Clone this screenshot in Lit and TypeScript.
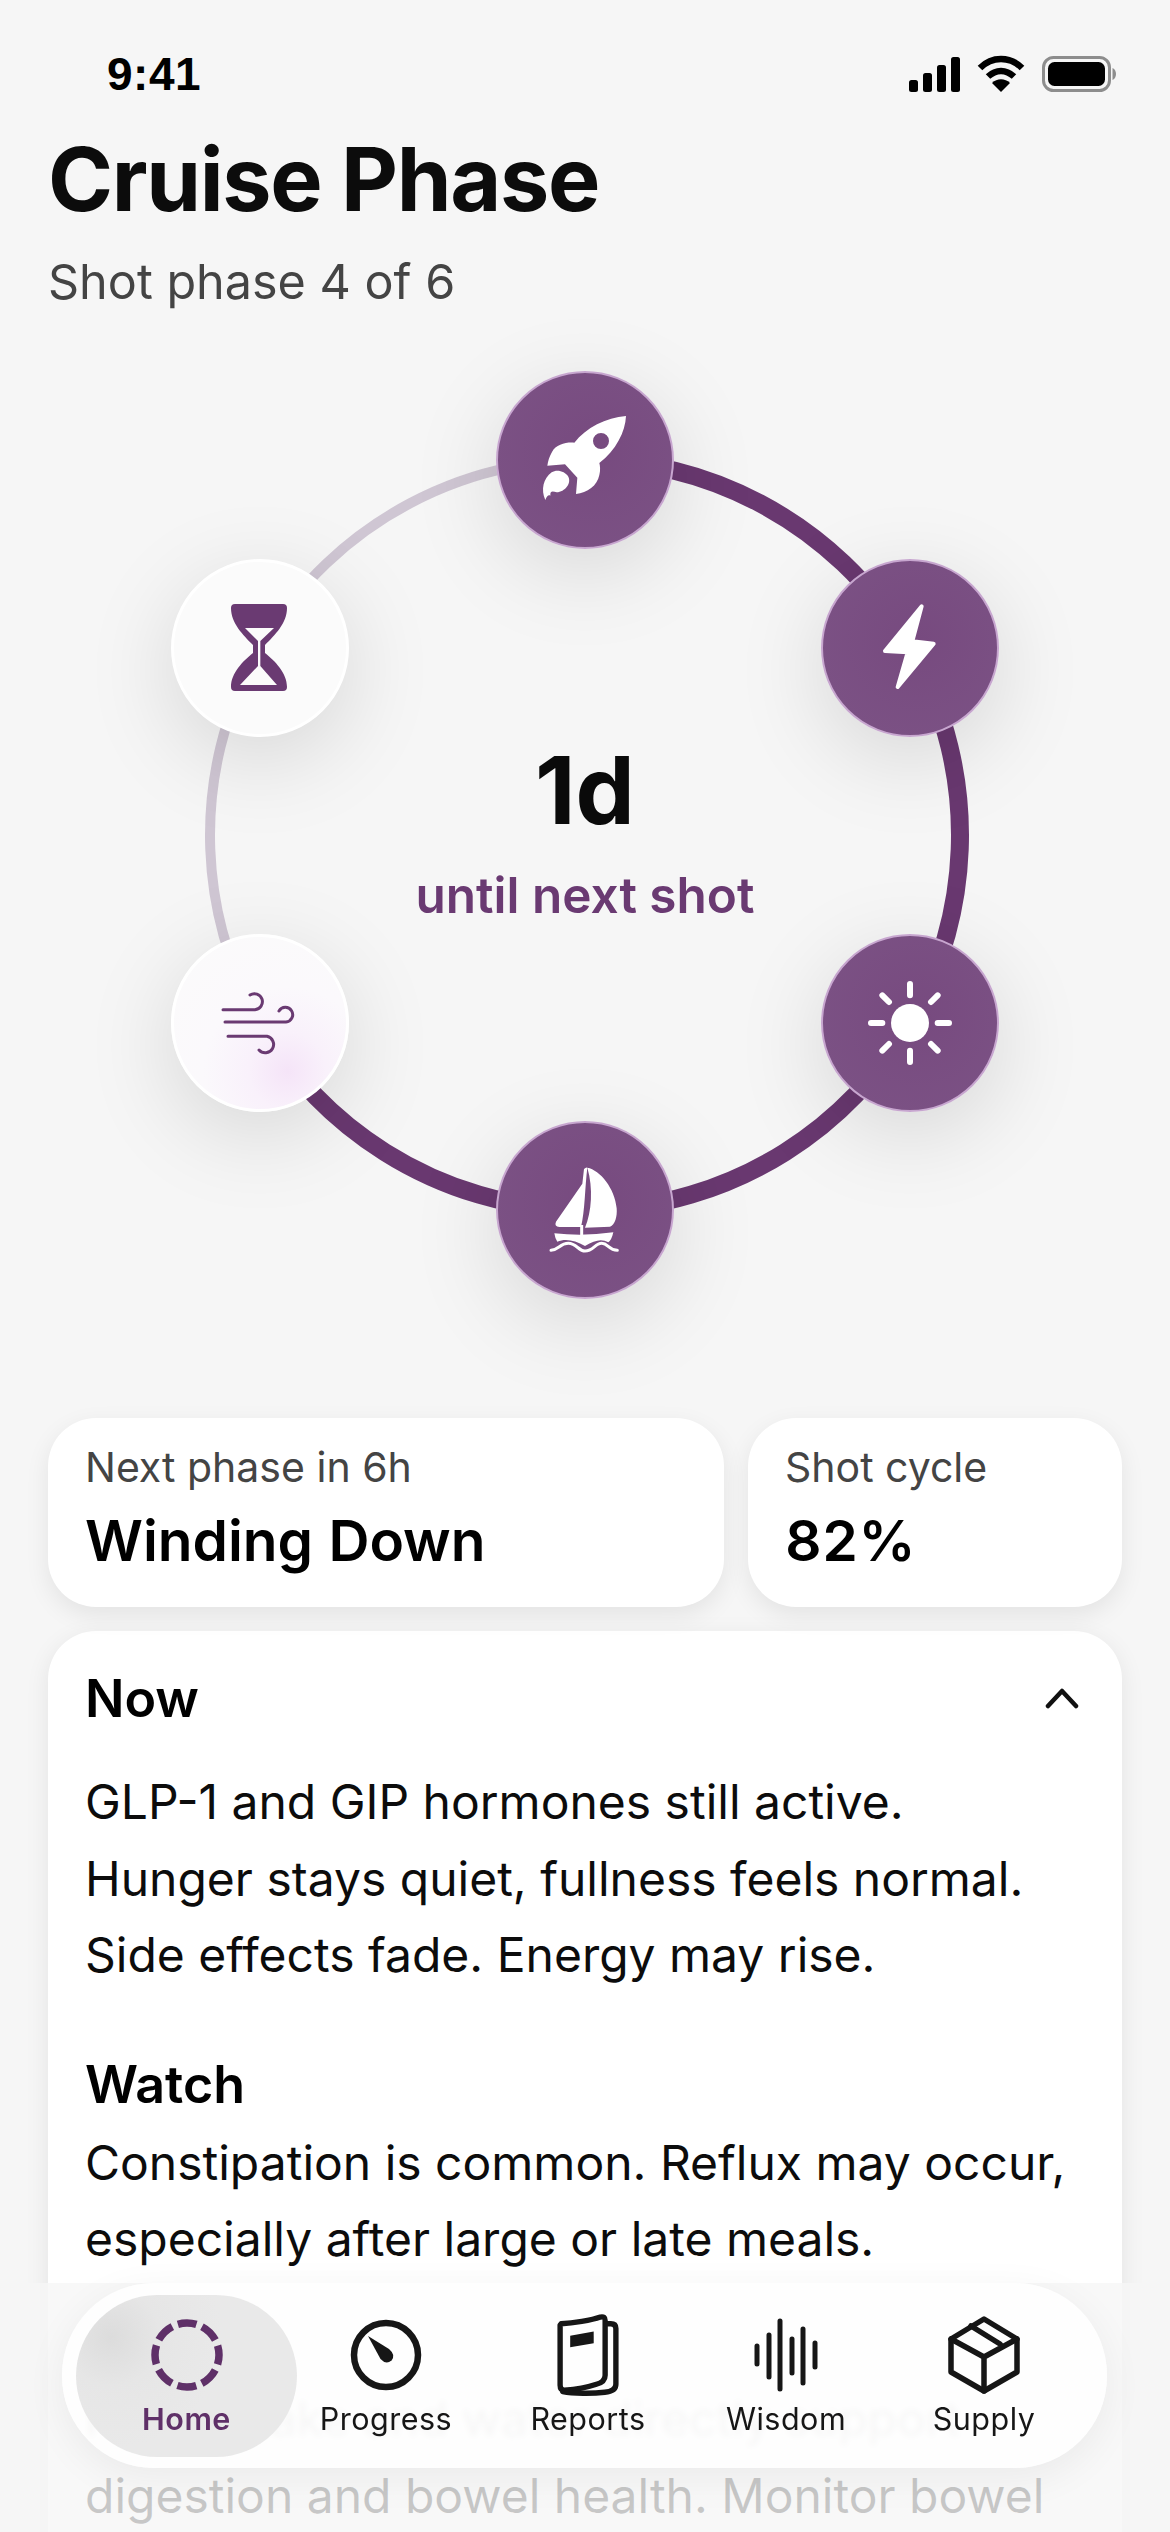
import { LitElement, html, css, svg } from "lit";
import { customElement } from "lit/decorators.js";

const ICONS: Record<string, unknown> = {
  rocket: svg`<path fill="#fff" fill-rule="evenodd" d="M378 123C318 128 258 158 223 203C198 201 168 208 156 231C148 245 144 258 142 272L195 268L232 308L228 357C262 354 292 332 298 300C302 285 300 272 298 264C348 226 376 170 378 123ZM303 174A24 24 0 1 1 303 222A24 24 0 1 1 303 174Z"/>
    <path fill="#fff" d="M136 375C122 345 130 310 155 292C170 282 195 288 205 305C215 325 195 350 170 352C160 350 150 345 151 362C145 358 140 365 136 375Z"/>`,
  bolt: svg`<path fill="#fff" stroke="#fff" stroke-width="12" stroke-linejoin="round" d="M290 130L262 235L326 242L218 372L248 268L180 264Z"/>`,
  sun: svg`<circle cx="255" cy="255" r="57" fill="#fff"/>
    <g stroke="#fff" stroke-width="18" stroke-linecap="round">
      <path d="M255 138V172M255 338V372M138 255H172M338 255H372M172 172L192 192M318 318L338 338M338 172L318 192M192 318L172 338"/>
    </g>`,
  boat: svg`<g fill="#fff">
      <path d="M262 128C300 135 345 190 350 250C352 275 345 300 330 305L255 308C275 260 280 190 262 128Z"/>
      <path d="M252 132Q258 126 262 128C255 180 255 260 243 306L178 306Q162 304 168 290L247 176Z"/>
      <path d="M163 325Q250 335 340 322Q335 345 325 352C305 340 285 345 255 363C225 345 195 340 172 350Q165 340 163 325Z"/>
    </g>
    <path fill="none" stroke="#fff" stroke-width="9" d="M245 300V330"/>
    <path fill="none" stroke="#fff" stroke-width="9" stroke-linecap="round" d="M153 376C175 375 180 355 205 355C230 355 235 378 255 378C280 378 285 355 305 355C325 355 325 376 352 376"/>`,
  wind: svg`<g fill="none" stroke="#6a3a72" stroke-width="9" stroke-linecap="round">
      <path d="M144 215H240A24 24 0 1 0 225 171"/>
      <path d="M150 252H333A22 22 0 1 0 312 219"/>
      <path d="M159 295H276A25 25 0 1 1 252 336"/>
    </g>`,
  glass: svg`<path fill="#6a3a72" d="M180 123H324Q336 123 336 135C336 180 300 216 270 246V270C300 294 336 330 336 372Q336 384 324 384H180Q168 384 168 372C168 330 204 294 234 270V246C204 216 168 180 168 135Q168 123 180 123Z"/>
    <path fill="#fbfbfb" d="M210 195H297L256 234V309L306 366H195L249 309V234Z"/>`,
};

const NODES = [
  { name: "rocket", angle: -90, on: true },
  { name: "bolt", angle: -30, on: true },
  { name: "sun", angle: 30, on: true },
  { name: "boat", angle: 90, on: true },
  { name: "wind", angle: 150, on: false },
  { name: "glass", angle: 210, on: false },
];

const RING_R = 375;
const RING_C = 450;

const point = (deg: number) => {
  const rad = (deg * Math.PI) / 180;
  return { x: RING_C + RING_R * Math.cos(rad), y: RING_C + RING_R * Math.sin(rad) };
};

const arc = (from: number, to: number) => {
  const a = point(from);
  const b = point(to);
  const large = to - from > 180 ? 1 : 0;
  return `M${a.x} ${a.y}A${RING_R} ${RING_R} 0 ${large} 1 ${b.x} ${b.y}`;
};

@customElement("app-root")
export class AppRoot extends LitElement {
  static styles = css`
    :host {
      display: block;
      position: relative;
      width: 1170px;
      height: 2532px;
      overflow: hidden;
      background: #f6f6f6;
      font-family: Inter, "Liberation Sans", sans-serif;
      color: #0b0b0b;
    }
    .status {
      display: flex;
      justify-content: space-between;
      align-items: center;
      height: 36px;
      padding: 56px 54px 0 107px;
    }
    .time {
      font-family: "Liberation Sans", Inter, sans-serif;
      font-size: 46px;
      font-weight: 700;
      color: #000;
      letter-spacing: 0.5px;
    }
    .status-icons {
      display: flex;
      align-items: center;
      gap: 17px;
    }
    .status-icons svg {
      display: block;
    }
    header {
      padding: 37px 48px 0;
    }
    h1 {
      margin: 0;
      font-size: 88px;
      line-height: 100px;
      font-weight: 700;
      letter-spacing: -1.3px;
      color: #0c0c0c;
    }
    .sub {
      margin-top: 23px;
      font-size: 48.5px;
      line-height: 60px;
      color: #444;
    }
    .ring {
      position: relative;
      width: 900px;
      height: 900px;
      margin: 73px auto 0;
    }
    .ring > svg {
      position: absolute;
      inset: 0;
    }
    .node {
      position: absolute;
      width: 178px;
      height: 178px;
      margin: -89px 0 0 -89px;
      border-radius: 50%;
      box-shadow: 0 22px 90px rgba(0, 0, 0, 0.13);
      display: flex;
      align-items: center;
      justify-content: center;
    }
    .node.on {
      background: radial-gradient(circle at 55% 45%, #774a7f 0%, #7b5184 75%, #77497e 100%);
      border: 2px solid #c7a6cf;
      box-sizing: border-box;
    }
    .node.off {
      background: #fbfbfb;
      border: 3px solid #fff;
      box-sizing: border-box;
    }
    .node.wind {
      background: radial-gradient(circle at 66% 78%, #f5e4f8 0%, #f9f1fb 22%, #fbf9fc 48%, #fbfbfb 100%);
    }
    .node svg {
      width: 170px;
      height: 170px;
      flex: none;
    }
    .center {
      position: absolute;
      left: 0;
      right: 0;
      top: 355px;
      text-align: center;
    }
    .big {
      font-size: 94px;
      line-height: 100px;
      font-weight: 700;
      color: #0a0a0a;
    }
    .until {
      margin-top: 25px;
      font-size: 49.5px;
      line-height: 60px;
      font-weight: 600;
      color: #6a3a72;
    }
    .stats {
      display: grid;
      grid-template-columns: 676px 374px;
      gap: 24px;
      padding: 0 48px;
      margin-top: 133px;
    }
    .stat {
      background: #fff;
      border-radius: 48px;
      height: 189px;
      box-sizing: border-box;
      padding: 24px 37px 0;
      box-shadow: 0 8px 24px rgba(0, 0, 0, 0.08);
    }
    .stat .label {
      font-size: 41px;
      line-height: 50px;
      color: #444;
    }
    .stat .value {
      margin-top: 14px;
      font-size: 56.8px;
      line-height: 70px;
      font-weight: 600;
      font-variant-numeric: tabular-nums;
      color: #000;
    }
    .detail {
      margin: 24px 48px 0;
      padding: 36px 37px 0;
      background: #fff;
      border-radius: 48px;
      box-shadow: 0 6px 24px rgba(0, 0, 0, 0.08);
      height: 1100px;
      box-sizing: border-box;
    }
    .detail-head {
      display: flex;
      justify-content: space-between;
      align-items: center;
      padding-right: 6px;
    }
    .detail-head svg {
      margin-top: -2px;
    }
    h2 {
      margin: 0;
      font-size: 52px;
      line-height: 64px;
      font-weight: 600;
      color: #000;
    }
    .detail p {
      margin: 0;
      font-size: 48px;
      line-height: 76.6px;
      color: #0c0c0c;
    }
    .detail p.p-now {
      padding-top: 33px;
    }
    .h-watch {
      margin-top: 59px;
    }
    .detail p.p-watch {
      padding-top: 8px;
    }
    .detail p.p-tail {
      margin-top: 103px;
    }
    .shade {
      position: absolute;
      left: 0;
      right: 0;
      top: 2283px;
      bottom: 0;
      background: rgba(246, 246, 246, 0.8);
    }
    nav {
      position: absolute;
      left: 62px;
      top: 2283px;
      width: 1045px;
      height: 185px;
      box-sizing: border-box;
      padding: 12px 0 0 24px;
      border-radius: 92px;
      background: rgba(255, 255, 255, 0.84);
      backdrop-filter: blur(3px);
      box-shadow: 0 10px 40px rgba(0, 0, 0, 0.06);
      display: grid;
      grid-template-columns: 200px 200px 204px 192px 204px;
      align-items: start;
    }
    .tab {
      display: flex;
      flex-direction: column;
      align-items: center;
      height: 162px;
      padding-top: 18px;
      box-sizing: border-box;
      font-size: 30.5px;
      line-height: 38px;
      letter-spacing: 0.5px;
      color: #161616;
    }
    .tab svg {
      width: 84px;
      height: 84px;
      display: block;
      margin-bottom: 3px;
    }
    .tab.active {
      margin: 0 -11px 0 -10px;
      border-radius: 81px;
      background: radial-gradient(circle at 16% 26%, #dcdcdc 0%, #e6e6e6 22%, #e9e9e9 50%);
      color: #5f3068;
      font-weight: 600;
    }
  `;

  private renderNode(n: { name: string; angle: number; on: boolean }) {
    const p = point(n.angle);
    return html`<div
      class="node ${n.on ? "on" : "off"} ${n.name}"
      style="left:${p.x}px;top:${p.y}px"
    >
      <svg viewBox="0 0 510 510">${ICONS[n.name]}</svg>
    </div>`;
  }

  render() {
    return html`
      <div class="status">
        <span class="time">9:41</span>
        <div class="status-icons">
          <svg width="51" height="36" viewBox="0 0 51 36">
            <g fill="#000">
              <rect x="0" y="24" width="9" height="12" rx="2.5" />
              <rect x="14" y="17" width="9" height="19" rx="2.5" />
              <rect x="28" y="9" width="9" height="27" rx="2.5" />
              <rect x="42" y="1" width="9" height="35" rx="2.5" />
            </g>
          </svg>
          <svg width="48" height="38" viewBox="0 0 48 38">
            <g fill="none" stroke="#000" stroke-width="6.5">
              <path d="M3 13C15 1 33 1 45 13" />
              <path d="M11 21.5C19 14 29 14 37 21.5" />
            </g>
            <path fill="#000" d="M24 37L15 28C20 23 28 23 33 28Z" />
          </svg>
          <svg width="74" height="36" viewBox="0 0 74 36">
            <rect x="1.5" y="1.5" width="66" height="33" rx="10" fill="none" stroke="#8d8d8d" stroke-width="3" />
            <rect x="6" y="6" width="57" height="24" rx="6.5" fill="#000" />
            <path d="M70.5 12C73 13 74 15.5 74 18C74 20.5 73 23 70.5 24Z" fill="#8d8d8d" />
          </svg>
        </div>
      </div>

      <header>
        <h1>Cruise Phase</h1>
        <div class="sub">Shot phase 4 of 6</div>
      </header>

      <section class="ring">
        <svg viewBox="0 0 900 900" width="900" height="900" fill="none">
          <path d=${arc(150, 270)} stroke="#cfc6d3" stroke-width="10" />
          <path d=${arc(-90, 150)} stroke="#693870" stroke-width="18" />
        </svg>
        ${NODES.map((n) => this.renderNode(n))}
        <div class="center">
          <div class="big">1d</div>
          <div class="until">until next shot</div>
        </div>
      </section>

      <section class="stats">
        <div class="stat">
          <div class="label">Next phase in 6h</div>
          <div class="value">Winding Down</div>
        </div>
        <div class="stat">
          <div class="label">Shot cycle</div>
          <div class="value">82%</div>
        </div>
      </section>

      <section class="detail">
        <div class="detail-head">
          <h2>Now</h2>
          <svg width="34" height="22" viewBox="0 0 34 22" fill="none">
            <path d="M3 19L17 4L31 19" stroke="#111" stroke-width="4.5" stroke-linecap="round" stroke-linejoin="round" />
          </svg>
        </div>
        <p class="p-now">
          GLP-1 and GIP hormones still active.<br />
          Hunger stays quiet, fullness feels normal.<br />
          Side effects fade. Energy may rise.
        </p>
        <h2 class="h-watch">Watch</h2>
        <p class="p-watch">
          Constipation is common. Reflux may occur,<br />
          especially after large or late meals.
        </p>
        <p class="p-tail">
          Fiber intake and water directly support<br />
          digestion and bowel health. Monitor bowel
        </p>
      </section>

      <div class="shade"></div>

      <nav>
        <div class="tab active">
          <svg viewBox="0 0 84 84" fill="none">
            <circle
              cx="42" cy="42" r="32"
              stroke="#5f3068" stroke-width="7.5"
              stroke-dasharray="19.13 6"
              stroke-dashoffset="9.56"
              transform="rotate(-90 42 42)"
            />
          </svg>
          Home
        </div>
        <div class="tab">
          <svg viewBox="0 0 84 84" fill="none">
            <circle cx="42" cy="42" r="32" stroke="#161616" stroke-width="6.5" />
            <path fill="#161616" d="M24 23L45 36Q52 42 47.5 47.5Q42 52 36.5 46Z" />
          </svg>
          Progress
        </div>
        <div class="tab">
          <svg viewBox="70 10 210 250" fill="none" stroke="#161616" stroke-width="16" stroke-linejoin="round" stroke-linecap="round">
            <path d="M95 42C130 40 185 32 212 22C222 20 226 24 226 32V195C226 210 215 218 200 222C170 232 130 238 105 240C95 240 92 234 92 225V46Z" />
            <path d="M228 42H243C254 42 258 47 258 56V222C258 236 245 244 225 246C190 250 130 250 100 244" />
            <path fill="#161616" stroke="none" d="M122 78L192 65V100L122 112Z" />
          </svg>
          Reports
        </div>
        <div class="tab">
          <svg viewBox="0 0 84 84" fill="none" stroke="#161616" stroke-width="5" stroke-linecap="round">
            <path d="M13 33V51M25 22V64M36 8V76M48 26V60M59 16V70M71 30V54" />
          </svg>
          Wisdom
        </div>
        <div class="tab">
          <svg viewBox="0 0 84 84" fill="none" stroke="#161616" stroke-width="5.5" stroke-linejoin="round" stroke-linecap="round">
            <path d="M42 6L75 26V59L42 78L9 59V26Z" />
            <path d="M9 26L42 44L75 26M42 44V78M29 13L58 31" />
          </svg>
          Supply
        </div>
      </nav>
    `;
  }
}
